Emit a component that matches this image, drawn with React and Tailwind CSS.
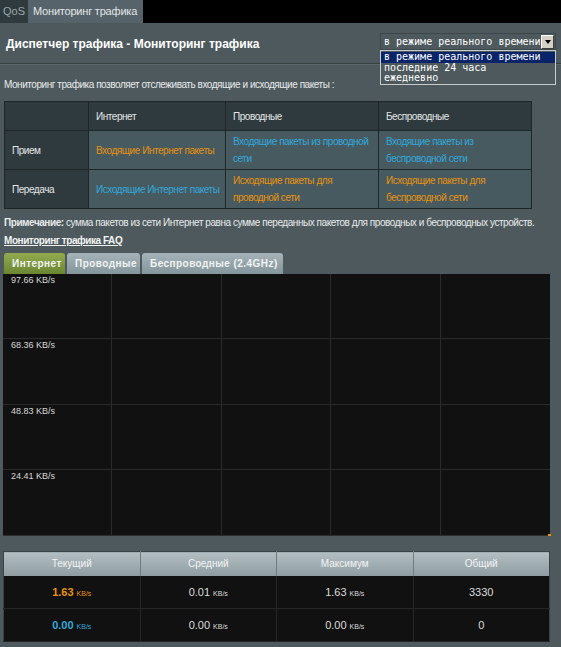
import React from "react";

const orange = "text-[#e8920e]";
const blue = "text-[#33a8dc]";

function TopTabs() {
  return (
    <div className="h-[23px] bg-black flex text-[11px] leading-[23px]">
      <div className="w-[28px] bg-[#2e3a3d] text-[#9ba6a9] pl-[3px]">QoS</div>
      <div className="w-[115px] bg-[#56636a] text-[#e2e6e7] pl-[5px] tracking-[-0.2px]">Мониторинг трафика</div>
    </div>
  );
}

function RangeSelect() {
  return (
    <div className="relative w-[176px] h-[17px] font-['DejaVu_Sans_Mono'] text-[10px] text-white">
      <div className="h-[17px] flex items-center justify-between border border-[#3b474a] bg-[#4d595d] pl-[3px] pr-[1px]">
        <span>в режиме реального времени</span>
        <span className="w-[13px] h-[14px] bg-[#d4d0c8] border border-t-white border-l-white border-r-[#404040] border-b-[#404040] flex items-center justify-center">
          <span className="w-0 h-0 border-l-[3px] border-r-[3px] border-t-[4px] border-l-transparent border-r-transparent border-t-black" />
        </span>
      </div>
      <div className="absolute left-0 top-[17px] w-[176px] border border-[#c8cccd] bg-[#4d595d] leading-[10px] py-[1px]">
        <div className="bg-[#0a246a] pl-[3px] h-[11px]">в режиме реального времени</div>
        <div className="pl-[3px] h-[10px]">последние 24 часа</div>
        <div className="pl-[3px] h-[10px]">ежедневно</div>
      </div>
    </div>
  );
}

function InfoTable() {
  const th = "bg-[#2e3a3d] border border-[#1e2628] text-left align-middle px-[7px] font-normal text-[#e4e7e8]";
  const td = "bg-[#475a5f] border border-[#1e2628] align-middle pl-[7px] pr-[1px] leading-[17px]";
  return (
    <table className="ml-[4px] mt-[10px] w-[527px] border-collapse text-[10px] tracking-[-0.45px] table-fixed">
      <colgroup>
        <col className="w-[84px]" />
        <col className="w-[137px]" />
        <col className="w-[153px]" />
        <col className="w-[153px]" />
      </colgroup>
      <tbody>
        <tr className="h-[29px]">
          <th className={th}></th>
          <th className={th}>Интернет</th>
          <th className={th}>Проводные</th>
          <th className={th}>Беспроводные</th>
        </tr>
        <tr className="h-[39px]">
          <th className={th}>Прием</th>
          <td className={`${td} ${orange}`}>Входящие Интернет пакеты</td>
          <td className={`${td} ${blue}`}>Входящие пакеты из проводной сети</td>
          <td className={`${td} ${blue}`}>Входящие пакеты из беспроводной сети</td>
        </tr>
        <tr className="h-[39px]">
          <th className={th}>Передача</th>
          <td className={`${td} ${blue} whitespace-nowrap`}>Исходящие Интернет пакеты</td>
          <td className={`${td} ${orange}`}>Исходящие пакеты для проводной сети</td>
          <td className={`${td} ${orange}`}>Исходящие пакеты для беспроводной сети</td>
        </tr>
      </tbody>
    </table>
  );
}

function GraphTabs() {
  const base = "h-[21px] rounded-t-[3px] pl-[8px] text-[10px] font-bold tracking-[0.45px] leading-[22px] text-[#f2f4f4] whitespace-nowrap";
  return (
    <div className="flex gap-[2px] ml-[4px] mt-[6px]">
      <div className={`${base} w-[61px] bg-gradient-to-b from-[#93ab4f] to-[#6a8630]`}>Интернет</div>
      <div className={`${base} w-[73px] bg-gradient-to-b from-[#a6b4b9] to-[#84959b]`}>Проводные</div>
      <div className={`${base} w-[141px] bg-gradient-to-b from-[#a6b4b9] to-[#84959b]`}>Беспроводные (2.4GHz)</div>
    </div>
  );
}

function Chart() {
  const labels = ["97.66 KB/s", "68.36 KB/s", "48.83 KB/s", "24.41 KB/s"];
  return (
    <div className="relative ml-[3px] w-[547px] h-[262px] bg-[#111111] border-b border-[#2e2e2e] grid grid-cols-5 grid-rows-4">
      {labels.map((l, r) =>
        [0, 1, 2, 3, 4].map((c) => (
          <div
            key={`${r}-${c}`}
            className={`border-[#2a2a2a] ${c < 4 ? "border-r" : ""} ${r < 3 ? "border-b" : ""} text-[9px] text-[#d8d8d8] pl-[8px] pt-[1px] leading-[11px]`}
          >
            {c === 0 ? l : ""}
          </div>
        ))
      )}
      <div className="absolute right-[-1px] bottom-[-1px] w-[3px] h-[2px] bg-[#e8920e]" />
    </div>
  );
}

function StatsTable() {
  const th = "h-[24px] font-normal text-[10px] text-[#f3f5f5] bg-gradient-to-b from-[#b2bec2] to-[#8e9ca1] border-r border-[#6f7c80] last:border-r-0";
  const td = "h-[33px] text-center text-[11px] border-r border-b border-[#262626] last:border-r-0";
  const gray = "text-[#dcdcdc]";
  const unit = "text-[7px] ml-[3px]";
  return (
    <table className="ml-[3px] mt-[15px] w-[547px] border-collapse table-fixed border border-[#3a4447] bg-[#111111]">
      <thead>
        <tr>
          <th className={th}>Текущий</th>
          <th className={th}>Средний</th>
          <th className={th}>Максимум</th>
          <th className={th}>Общий</th>
        </tr>
      </thead>
      <tbody>
        <tr>
          <td className={`${td} ${orange}`}><b>1.63</b><span className={unit}>KB/s</span></td>
          <td className={`${td} ${gray}`}>0.01<span className={unit}>KB/s</span></td>
          <td className={`${td} ${gray}`}>1.63<span className={unit}>KB/s</span></td>
          <td className={`${td} ${gray}`}>3330</td>
        </tr>
        <tr>
          <td className={`${td} ${blue}`}><b>0.00</b><span className={unit}>KB/s</span></td>
          <td className={`${td} ${gray}`}>0.00<span className={unit}>KB/s</span></td>
          <td className={`${td} ${gray}`}>0.00<span className={unit}>KB/s</span></td>
          <td className={`${td} ${gray}`}>0</td>
        </tr>
      </tbody>
    </table>
  );
}

export default function App() {
  return (
    <div className="w-[561px] h-[647px] overflow-hidden bg-[#4d595d] font-['Liberation_Sans',Arial,sans-serif] text-[#eef0f0]">
      <TopTabs />
      <div className="flex justify-between items-start mt-[10px] pl-[6px] pr-[5px]">
        <h1 className="mt-[4px] text-[12px] leading-[15px] font-bold text-white">
          Диспетчер трафика - Мониторинг трафика
        </h1>
        <RangeSelect />
      </div>
      <div className="mt-[11px] h-[2px] border-t border-[#35413f] border-b border-b-[#5a676b]" />
      <p className="mt-[14px] ml-[4px] text-[10px] leading-[12px] tracking-[-0.45px] text-[#e8ebeb]">
        Мониторинг трафика позволяет отслеживать входящие и исходящие пакеты :
      </p>
      <InfoTable />
      <p className="mt-[8px] ml-[4px] text-[10px] leading-[12px] tracking-[-0.45px] text-[#e8ebeb] whitespace-nowrap">
        <b>Примечание:</b> сумма пакетов из сети Интернет равна сумме переданных пакетов для проводных и беспроводных устройств.
      </p>
      <a className="block mt-[6px] ml-[4px] text-[10px] leading-[12px] tracking-[-0.45px] font-bold underline text-[#f2f4f4]">
        Мониторинг трафика FAQ
      </a>
      <GraphTabs />
      <Chart />
      <StatsTable />
    </div>
  );
}
